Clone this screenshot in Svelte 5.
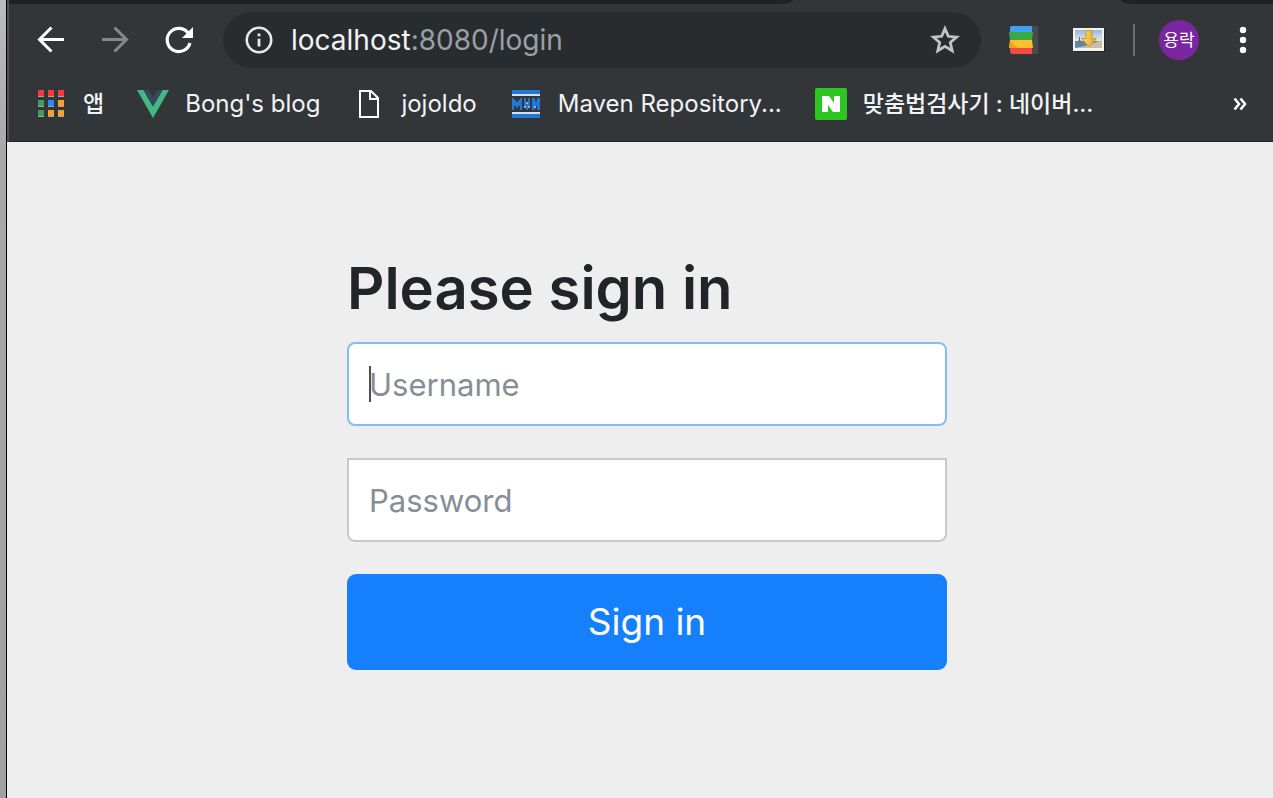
<script>
  let username = $state('');
  let password = $state('');
  const dots = [
    [3, 6, '#f73b3b'], [13, 6, '#f73b3b'], [23, 6, '#f73b3b'],
    [3, 16, '#3ba15b'], [13, 16, '#2a8bf5'], [23, 16, '#f5a12b'],
    [3, 26, '#3ba15b'], [13, 26, '#f5a12b'], [23, 26, '#f5a12b']
  ];
</script>

<div class="screen">
  <div class="browser">
    <header class="chrome">
      <div class="tabs"><span class="tab before"></span><span class="tab after"></span></div>

      <div class="toolbar">
        <button class="nav" aria-label="Back">
          <svg width="32" height="32" viewBox="0 0 32 32" fill="none" stroke="#fff" stroke-width="3"><path d="M29 15.500H5M16.500 3.500L4.500 15.500L16.500 27.500" /></svg>
        </button>
        <button class="nav" aria-label="Forward">
          <svg width="32" height="32" viewBox="0 0 32 32" fill="none" stroke="#85888a" stroke-width="3"><path d="M3 15.500H27M15.500 3.500L27.500 15.500L15.500 27.500" /></svg>
        </button>
        <button class="nav" aria-label="Reload">
          <svg width="32" height="32" viewBox="0 0 32 32"><path d="M25.500 9.500A11.600 11.600 0 1 0 27 19" fill="none" stroke="#fff" stroke-width="3.200" /><path d="M30 3V14H19Z" fill="#fff" /></svg>
        </button>

        <div class="address">
          <svg width="28" height="28" viewBox="0 0 28 28"><circle cx="14" cy="14" r="12.200" fill="none" stroke="#e8eaed" stroke-width="2.600" /><path d="M12.600 7.500h2.800v2.800h-2.800zM12.600 12.800h2.800v7.700h-2.800z" fill="#e8eaed" /></svg>
          <span class="url"><b>localhost</b>:8080/login</span>
          <button class="star" aria-label="Bookmark this page">
            <svg width="32" height="32" viewBox="0 0 32 32"><path d="M16 4.600L19.300 12.300L27.600 13L21.300 18.500L23.200 26.700L16 22.300L8.800 26.700L10.700 18.500L4.400 13L12.700 12.300Z" fill="none" stroke="#c1c4c7" stroke-width="2.800" /></svg>
          </button>
        </div>

        <div class="extensions">
          <button class="ext" aria-label="Stacks extension">
            <svg width="32" height="32" viewBox="0 0 32 32">
              <path d="M22 2h8q2 0 2 2v24q0 2-2 2h-8z" fill="#3a3b3c" /><path d="M25 2h5q1 0 1 1v25q0 2-2 2h-4z" fill="#4a4a4a" />
              <path d="M5 2h20v9H3V4q0-2 2-2z" fill="#3ea2f7" />
              <path d="M3 22h22v8H6q-3 0-3-3z" fill="#f14b43" />
              <path d="M3 16h22l1 8H2z" fill="#fbc02d" /><path d="M3 17l8 7H2z" fill="#e9a31d" />
              <path d="M2 8h24l-1 8H3z" fill="#3aa843" />
            </svg>
          </button>
          <button class="ext" aria-label="Image downloader extension">
            <svg width="32" height="28" viewBox="0 0 32 28">
              <defs>
                <linearGradient id="sky" x2="0" y2="1"><stop stop-color="#93b6e2" /><stop offset="1" stop-color="#eee9da" /></linearGradient>
                <linearGradient id="arrow"><stop stop-color="#ffe16b" /><stop offset="1" stop-color="#dfa323" /></linearGradient>
              </defs>
              <path d="M1 3h31v23H1z" fill="#202124" /><path d="M0 2h31v23H0z" fill="#f3f3ef" />
              <path d="M2 4h27v11H2z" fill="url(#sky)" /><path d="M2 15h27v7H2z" fill="#6385a3" /><path d="M2 22l10-2 17-6v8z" fill="#c9bfa9" />
              <path d="M6.500 11v4M5 15h3" stroke="#885d57" />
              <path d="M13 4.500h6v8h4.500L16 20.500l-7.500-8H13z" fill="url(#arrow)" stroke="#c89a35" stroke-width="1" />
            </svg>
          </button>
        </div>
        <span class="divider"></span>
        <button class="avatar">용락</button>
        <button class="menu" aria-label="Menu">
          <svg width="8" height="28" viewBox="0 0 8 28" fill="#fff"><circle cx="4" cy="4" r="3.200" /><circle cx="4" cy="14" r="3.200" /><circle cx="4" cy="24" r="3.200" /></svg>
        </button>
      </div>

      <nav class="bookmarks">
        <a class="korean" href="#apps">
          <svg width="32" height="36" viewBox="0 0 32 36">
            {#each dots as [x, y, color]}
              <rect {x} y={y - 2} width="6" height="7" fill="#a3a5a6" /><rect {x} y={y - 2} width="6" height="6" fill={color} />
            {/each}
          </svg>앱</a>
        <a href="#bong">
          <svg width="32" height="28" viewBox="0 0 32 28"><path d="M0 0h6.500L16 16.500L25.500 0H32L16 28z" fill="#42b883" /><path d="M6.500 0H12l4 7 4-7h5.500L16 16.500z" fill="#35495e" /></svg>Bong's blog</a>
        <a href="#jojoldo">
          <svg width="32" height="28" viewBox="0 0 32 28" fill="none" stroke="#fff" stroke-width="2"><path d="M7 1h11l7 7v19H7zM17 1v8h8" /></svg>jojoldo</a>
        <a href="#maven">
          <svg width="32" height="28" viewBox="0 0 32 28">
            <path d="M2 0h28v4H2zM2 24h28v4H2z" fill="#2277d5" /><path d="M2 4h28v2H2zM2 22h28v2H2z" fill="#d5e0ed" />
            <path d="M2 8h2v2h2v2h2v-2h2V8h2v12h-2v-4H8v2H6v-2H4v4H2zM14 8h2v4h2V8h2v10h-2v2h-2v-2h-2zM22 8h3v3h2V8h3v12h-3v-4h-2v4h-3z" fill="#2277d5" /><path d="M16 12h2v2h-2zM14 16h2v2h-2zM18 16h2v2h-2zM24 16h2v2h-2z" fill="#8fb1da" />
          </svg>Maven Repository...</a>
        <a class="korean" href="#spelling">
          <svg width="32" height="32" viewBox="0 0 32 32"><rect width="32" height="32" rx="2" fill="#2dc522" /><path d="M7 8h7l5 7V8h6v16h-7l-5-7v7H7z" fill="#fff" /></svg>맞춤법검사기 : 네이버...</a>
        <button class="more" aria-label="More bookmarks">
          <svg width="14" height="14" viewBox="0 0 14 14" fill="none" stroke="#fff" stroke-width="2.600"><path d="M1.500 1.500L6 7L1.500 12.500M7.500 1.500L12 7L7.500 12.500" /></svg>
        </button>
      </nav>
    </header>

    <main>
      <form onsubmit={(e) => e.preventDefault()}>
        <h1>Please sign in</h1>
        <div class="field">
          <input class="active" type="text" placeholder="Username" aria-label="Username" bind:value={username} />
          {#if !username}<span class="caret"></span>{/if}
        </div>
        <input class="password" type="password" placeholder="Password" aria-label="Password" bind:value={password} />
        <button class="submit" type="submit">Sign in</button>
      </form>
    </main>
  </div>
</div>

<style>
  :global(body) { margin: 0; }
  .screen, .screen * { box-sizing: border-box; }
  .screen {
    min-height: 100vh;
    display: flex;
    padding-left: 6px;
    background: linear-gradient(#bcbcbc, #a8a8a8 160px, #a0a0a0);
    font-family: Inter, "Noto Sans CJK KR", sans-serif;
  }
  button, input { font-family: inherit; }
  button { padding: 0; border: 0; background: none; color: inherit; }
  svg { display: block; flex: none; }
  .browser {
    flex: 1;
    min-width: 0;
    display: flex;
    flex-direction: column;
    border-left: 1px solid #000;
    background: #eee;
  }
  .chrome {
    background: #323639;
    border-left: 2px solid #4e5356;
    border-bottom: 1px solid #25282a;
    color: #f1f3f4;
  }
  .tabs { display: flex; justify-content: space-between; height: 4px; }
  .tab { background: #202124; }
  .before { width: 62%; border-bottom-right-radius: 12px 4px; }
  .after { width: 12%; border-bottom-left-radius: 12px 4px; }
  .toolbar { display: flex; align-items: center; height: 72px; padding-left: 10px; }
  .nav { width: 64px; height: 56px; display: grid; place-items: center; }
  .address {
    flex: 1;
    min-width: 0;
    height: 56px;
    margin: 0 12px;
    padding: 0 20px 0 22px;
    display: flex;
    align-items: center;
    gap: 18px;
    border-radius: 28px;
    background: #292c2f;
  }
  .url { flex: 1; font-size: 28px; line-height: 36px; color: #9aa0a6; white-space: nowrap; }
  .url b { font-weight: 400; color: #f1f3f4; }
  .extensions { display: flex; gap: 6px; }
  .ext { width: 60px; height: 56px; display: grid; place-items: center; }
  .divider { width: 2px; height: 32px; margin: 0 24px 0 14px; background: #6b6e71; }
  .avatar { width: 40px; height: 40px; border-radius: 50%; background: #7b26a0; color: #fff; font-size: 17px; line-height: 40px; }
  .menu { width: 60px; height: 56px; margin-left: 14px; display: grid; place-items: center; }
  .bookmarks { display: flex; align-items: center; gap: 33px; height: 65px; padding: 0 26px 9px; }
  .bookmarks a {
    display: flex;
    align-items: center;
    gap: 16px;
    color: inherit;
    text-decoration: none;
    font-size: 24px;
    line-height: 32px;
    white-space: nowrap;
  }
  .bookmarks .korean { font-size: 23px; font-weight: 500; }
  .more { margin-left: auto; }
  main { flex: 1; padding: 108px 40px 40px 54px; }
  form { max-width: 600px; margin: 0 auto; display: flex; flex-direction: column; }
  h1 { margin: 0 0 16px; font-size: 58px; font-weight: 600; line-height: 76px; color: #212529; white-space: nowrap; }
  .field { position: relative; margin-bottom: 32px; }
  input {
    display: block;
    width: 100%;
    height: 84px;
    padding: 0 20px;
    border: 2px solid #c8c8c8;
    border-radius: 8px;
    background: #fff;
    color: #495057;
    font-size: 31px;
    outline: none;
  }
  input::placeholder { color: #868e96; opacity: 1; }
  .active { border-color: #80bdff; }
  .password { border-radius: 0 0 8px 8px; }
  .caret { position: absolute; left: 22px; top: 24px; width: 2px; height: 36px; background: #495057; }
  .submit { margin-top: 32px; height: 96px; border-radius: 9px; background: #167ffc; color: #fff; font-size: 37px; line-height: 60px; }
</style>
